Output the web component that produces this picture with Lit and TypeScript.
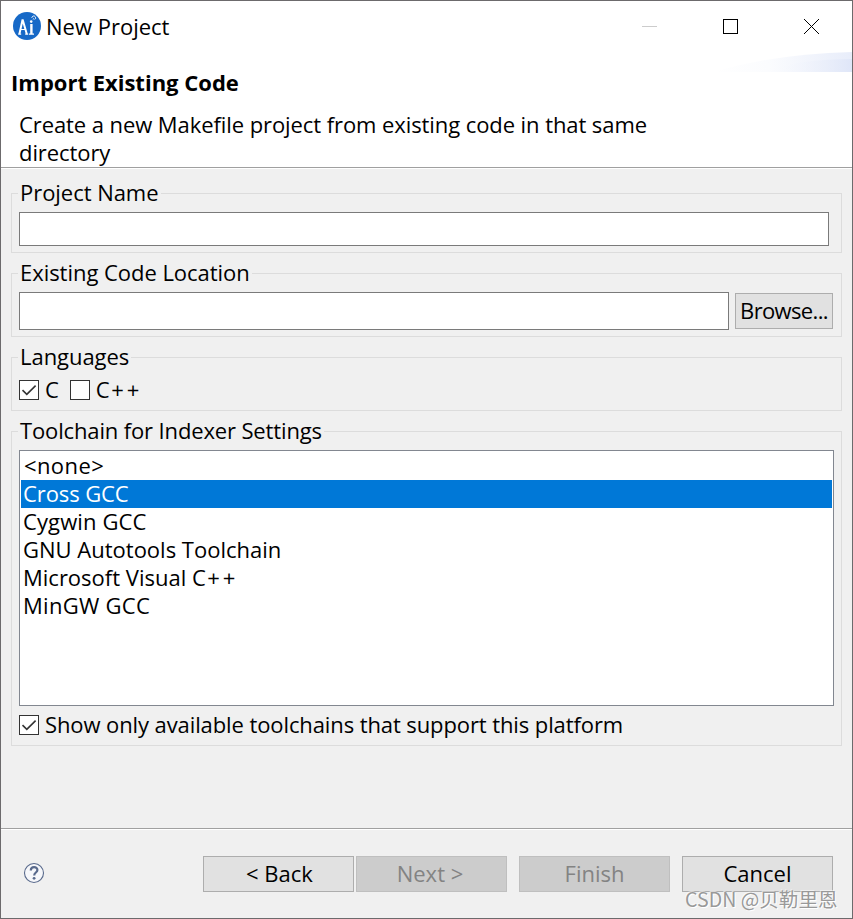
import { LitElement, html, css, svg, nothing } from "lit";
import { customElement, property } from "lit/decorators.js";
import { classMap } from "lit/directives/class-map.js";

const toolchains = [
  { label: html`&lt;none&gt;`, kind: "none" },
  { label: "Cross GCC", kind: "cross" },
  { label: "Cygwin GCC", kind: "cygwin" },
  { label: "GNU Autotools Toolchain", kind: "gnu" },
  { label: html`Microsoft Visual C<span class="plus">++</span>`, kind: "msvc" },
  { label: "MinGW GCC", kind: "mingw" },
];

@customElement("check-box")
export class CheckBox extends LitElement {
  @property({ type: Boolean }) checked = false;

  static styles = css`
    :host { display: flex; align-items: center; height: 28px; white-space: nowrap; }
    .box { width: 18px; height: 18px; border: 1px solid #333; background: #fff; margin-right: 6px; flex: none; }
    .box svg { display: block; }
    .text { margin-top: -2px; }
  `;

  render() {
    return html`<span class="box">${this.checked
        ? html`<svg width="18" height="18" viewBox="0 0 18 18">
            <path d="M2.5 9.2 L6.8 13.3 L15.6 4.6" fill="none" stroke="#333" stroke-width="1.6" />
          </svg>`
        : nothing}</span><span class="text"><slot></slot></span>`;
  }
}

@customElement("group-box")
export class GroupBox extends LitElement {
  @property() label = "";

  static styles = css`
    :host { display: block; box-sizing: border-box; border: 1px solid #dcdcdc; margin: 0 10px; padding: 0 7px; }
    .title { width: max-content; height: 28px; line-height: 28px; margin: -16px 0 6px -1px; padding: 0 2px; background: #f0f0f0; white-space: nowrap; letter-spacing: var(--title-spacing, -0.04px); }
  `;

  render() {
    return html`<div class="title">${this.label}</div><slot></slot>`;
  }
}

@customElement("app-root")
export class AppRoot extends LitElement {
  static styles = css`
    :host {
      display: flex; flex-direction: column; box-sizing: border-box; width: 853px; height: 919px;
      border: 1px solid #6c6a6c; background: #f0f0f0; color: #000; overflow: hidden; position: relative;
      font: 22px/28px "Open Sans", "Noto Sans", "Noto Sans CJK SC", sans-serif;
    }
    .titlebar { display: flex; align-items: center; height: 50px; background: #fff; padding-left: 12px; flex: none; }
    .logo { display: block; margin-right: 5px; }
    .caption { flex: 1; margin-top: -1px; }
    .controls { display: block; }
    .header { height: 116px; background: #fff; border-bottom: 1px solid #a0a0a0; flex: none; display: grid; grid-template-columns: 1fr 140px; box-shadow: 0 1px #fff; position: relative; }
    .heading { margin: 17px 0 14px 10px; font-size: 22px; line-height: 28px; font-weight: 700; }
    .desc { margin: 0 0 0 18px; width: 660px; letter-spacing: -0.08px; }
    .swoosh { display: block; }
    .body { height: 661px; flex: none; box-sizing: border-box; padding-top: 25px; display: flex; flex-direction: column; border-bottom: 1px solid #a0a0a0; box-shadow: 0 1px #fff; }
    .g-name { height: 60px; margin-bottom: 20px; }
    .g-loc { height: 64px; margin-bottom: 20px; }
    .g-lang { height: 54px; margin-bottom: 20px; }
    .g-tool { height: 315px; --title-spacing: -0.14px; }
    .field { box-sizing: border-box; border: 1px solid #7a7a7a; background: #fff; }
    .name { width: 810px; height: 34px; }
    .row { display: flex; align-items: center; }
    .loc { width: 710px; height: 38px; margin-right: 6px; }
    .btn { box-sizing: border-box; height: 36px; width: 151px; border: 1px solid #adadad; background: #e1e1e1; display: flex; align-items: center; justify-content: center; white-space: nowrap; padding-bottom: 1px; }
    .btn.off { background: #ccc; border-color: #bfbfbf; color: #838383; }
    .btn.browse { width: 98px; letter-spacing: -0.65px; padding-bottom: 2px; }
    .langs { display: flex; gap: 11px; margin-top: 4px; }
    .plus { letter-spacing: 3px; margin-left: 1.5px; }
    .list { box-sizing: border-box; width: 815px; height: 256px; border: 1px solid #828790; background: #fff; padding: 1px; margin-bottom: 5px; }
    .item { height: 28px; line-height: 26px; padding-left: 2px; white-space: nowrap; }
    .item.sel { background: #0078d7; color: #fff; letter-spacing: -0.1px; }
    .item.none { padding-left: 3px; letter-spacing: 0.4px; }
    .item.cygwin { letter-spacing: 0.12px; }
    .item.mingw { letter-spacing: 0.28px; }
    .only { letter-spacing: -0.1px; }
    .footer { display: flex; align-items: center; flex: 1; padding: 0 19px 0 22px; }
    .help { display: block; margin: -2px auto 0 0; }
    .back { margin-right: 2px; padding-left: 2px; }
    .next, .finish { margin-right: 12px; }
    .next { padding-right: 3px; }
    .mark { position: absolute; left: 684px; top: 884px; font-size: 19.6px; line-height: 28px; color: #999; white-space: nowrap; text-shadow: 1px 1px #fff, -1px -1px #fff8; font-family: "Noto Sans CJK SC", sans-serif; }
  `;

  private logo() {
    return svg`<svg class="logo" width="28" height="28" viewBox="0 0 28 28">
      <circle cx="14" cy="14" r="14" fill="#1769c7" />
      <g fill="none" stroke="#fff">
        <path d="M6.4 22 L9.6 7.5 L13.8 22" stroke-width="2" />
        <path d="M5.2 22.2 h3 M12.2 22.2 h3 M16 22.2 h5" stroke-width="1.2" />
        <path d="M8 17.5 h4" stroke-width="1" />
        <path d="M18.4 12 V22" stroke-width="2.4" />
        <path d="M18.8 5.8 c.6-2.8 4.2-2.2 3.8 1" stroke-width="1" />
        <path d="M19.8 7.3 q1.2-1.5 2 .3" stroke-width=".8" />
      </g>
      <circle cx="18.2" cy="9.6" r="1.3" fill="#fff" />
    </svg>`;
  }

  render() {
    return html`
      <div class="titlebar">
        ${this.logo()}
        <span class="caption">New Project</span>
        <svg class="controls" width="211" height="50" viewBox="641 1 211 50" shape-rendering="crispEdges">
          <rect x="642" y="26" width="15" height="1" fill="#ccc" />
          <rect x="723.5" y="19.5" width="14" height="14" fill="none" stroke="#000" />
          <path d="M804 19 L819 34 M819 19 L804 34" stroke="#000" shape-rendering="auto" />
        </svg>
      </div>
      <div class="header">
        <div>
          <div class="heading">Import Existing Code</div>
          <p class="desc">Create a new Makefile project from existing code in that same directory</p>
        </div>
        <svg class="swoosh" width="140" height="21" viewBox="712 51 140 21">
          <defs>
            <linearGradient id="g"><stop offset="0" stop-color="#fff" /><stop offset=".4" stop-color="#fbfcfe" /><stop offset="1" stop-color="#e8edfa" /></linearGradient>
            <linearGradient id="h"><stop offset="0" stop-color="#fff" stop-opacity="0" /><stop offset="1" stop-color="#dfe6f8" /></linearGradient>
          </defs>
          <path d="M712 72 Q775 54 852 52 V72 Z" fill="url(#g)" />
          <path d="M760 72 Q800 59 852 59 V72 Z" fill="url(#h)" />
        </svg>
      </div>
      <div class="body">
        <group-box class="g-name" label="Project Name"><div class="field name"></div></group-box>
        <group-box class="g-loc" label="Existing Code Location">
          <div class="row"><div class="field loc"></div><div class="btn browse">Browse...</div></div>
        </group-box>
        <group-box class="g-lang" label="Languages">
          <div class="langs"><check-box checked>C</check-box><check-box>C<span class="plus">++</span></check-box></div>
        </group-box>
        <group-box class="g-tool" label="Toolchain for Indexer Settings">
          <div class="list">
            ${toolchains.map((t) => html`<div class=${classMap({ item: true, [t.kind]: true, sel: t.kind === "cross" })}>${t.label}</div>`)}
          </div>
          <check-box class="only" checked>Show only available toolchains that support this platform</check-box>
        </group-box>
      </div>
      <div class="footer">
        <svg class="help" width="22" height="22" viewBox="0 0 22 22">
          <circle cx="11" cy="11" r="9.5" fill="#f6f7fa" stroke="#596a8c" stroke-width="1.1" />
          <path d="M7.8 8.4 C7.8 4.2 14.4 4.2 14.4 8 C14.4 10.6 11.2 10.4 11.2 13.4" fill="none" stroke="#596a8c" stroke-width="2.2" />
          <circle cx="11.1" cy="16.3" r="1.4" fill="#596a8c" />
        </svg>
        <div class="btn back">&lt; Back</div>
        <div class="btn off next">Next &gt;</div>
        <div class="btn off finish">Finish</div>
        <div class="btn cancel">Cancel</div>
      </div>
      <div class="mark">CSDN @贝勒里恩</div>
    `;
  }
}
